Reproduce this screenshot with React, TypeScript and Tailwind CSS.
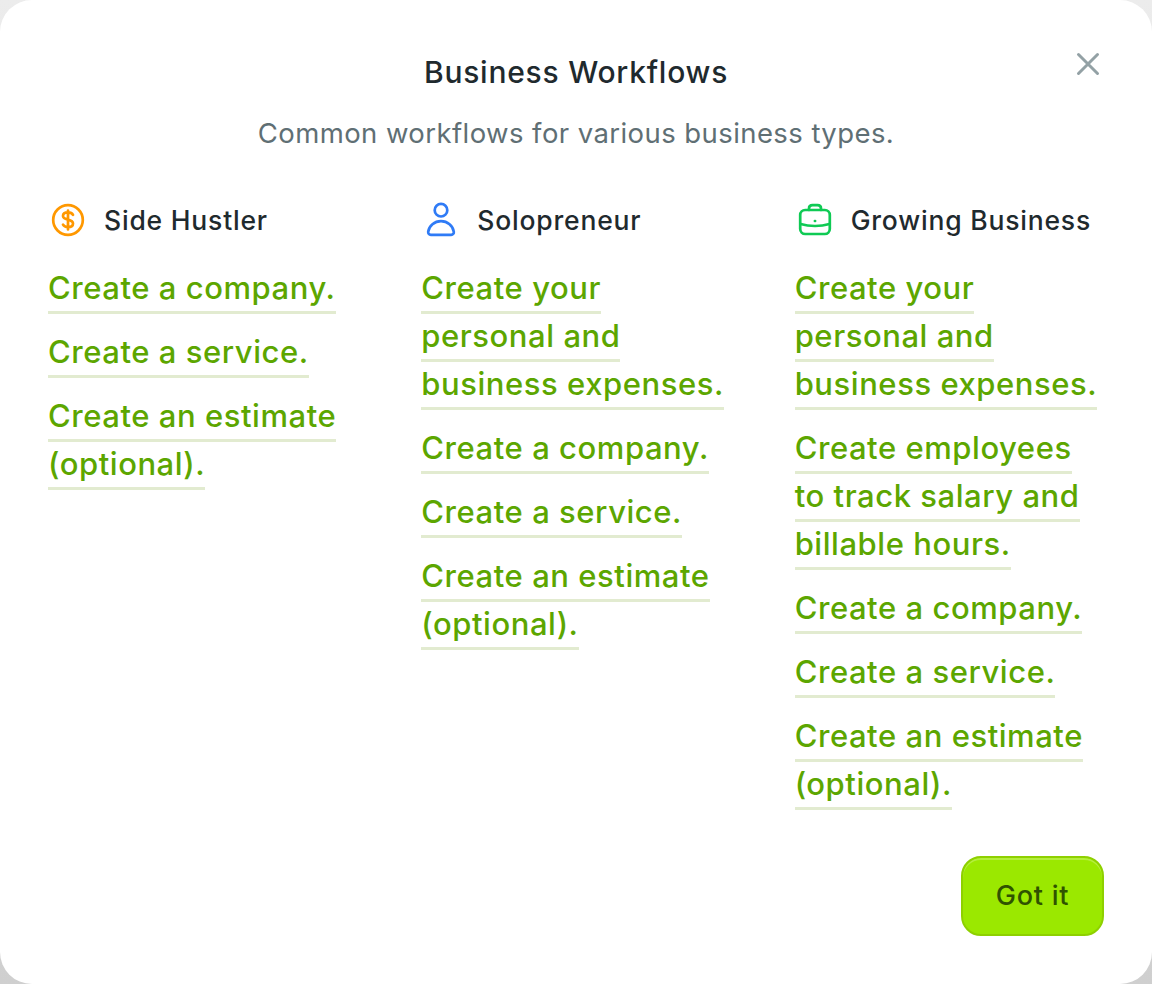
import { FC } from 'react'

const font = 'font-["Inter",sans-serif]'

const DollarIcon: FC = () => (
  <svg viewBox="0 0 40 40" fill="none" stroke="#ff9800" strokeWidth="2.700" strokeLinecap="round" strokeLinejoin="round" className="size-10 shrink-0">
    <circle cx="20" cy="20" r="14.800" />
    <path d="M25 14.800c-.8-1.500-2.600-2.400-5-2.400-3 0-5 1.500-5 3.600 0 4.800 10 2.400 10 7.400 0 2.100-2 3.600-5 3.600-2.400 0-4.200-.9-5-2.400M20 10.500v19" />
  </svg>
)

const PersonIcon: FC = () => (
  <svg viewBox="0 0 40 40" fill="none" stroke="#2f7bf6" strokeWidth="2.700" strokeLinecap="round" strokeLinejoin="round" className="size-10 shrink-0">
    <circle cx="20" cy="10.200" r="6.300" />
    <path d="M20 21.200c-6.500 0-12 4.600-12.800 10.600-.2 1.800.9 3 2.600 3h20.400c1.700 0 2.800-1.200 2.600-3C32 25.800 26.500 21.200 20 21.200Z" />
  </svg>
)

const CaseIcon: FC = () => (
  <svg viewBox="0 0 40 40" fill="none" stroke="#0fca54" strokeWidth="2.700" strokeLinecap="round" strokeLinejoin="round" className="size-10 shrink-0">
    <rect x="5.200" y="10" width="29.600" height="24" rx="5" />
    <path d="M14 10V8.500C14 6.500 15.500 5.200 17.500 5.200h5C24.500 5.200 26 6.500 26 8.500V10M5.500 24c4.500 1.300 9 2 14.500 2s10-.7 14.500-2" />
    <path d="M19.900 21h.2" />
  </svg>
)

const links: Record<string, string[]> = {
  company: ['Create a company.'],
  service: ['Create a service.'],
  estimate: ['Create an estimate', '(optional).'],
  expenses: ['Create your', 'personal and', 'business expenses.'],
  employees: ['Create employees', 'to track salary and', 'billable hours.'],
}

const columns = [
  { title: 'Side Hustler', icon: <DollarIcon />, items: ['company', 'service', 'estimate'] },
  { title: 'Solopreneur', icon: <PersonIcon />, items: ['expenses', 'company', 'service', 'estimate'] },
  { title: 'Growing Business', icon: <CaseIcon />, items: ['expenses', 'employees', 'company', 'service', 'estimate'] },
]

const App: FC = () => {
  return (
    <div className={`h-[984px] w-[1152px] overflow-hidden bg-gradient-to-b from-[#ececec] to-[#cfcfcf] ${font}`}>
      <div className="relative flex h-full flex-col rounded-[32px] bg-white px-12 pt-[48px]">
        <button type="button" className="absolute top-[48px] right-[48px] text-[#93a1a5]">
          <svg viewBox="0 0 32 32" fill="none" stroke="currentColor" strokeWidth="3" strokeLinecap="round" className="size-8">
            <path d="M6.500 6.500l19 19M25.500 6.500l-19 19" />
          </svg>
        </button>

        <h1 className="text-center text-[30px] leading-[48px] font-[550] tracking-[0.75px] text-[#1f2a2e]">Business Workflows</h1>
        <p className="mt-[13px] text-center text-[27.500px] leading-[48px] tracking-[0.42px] text-[#5f6f74]">Common workflows for various business types.</p>

        <div className="mt-[39px] grid grid-cols-3 gap-x-16">
          {columns.map((col) => (
            <div key={col.title} className="flex flex-col">
              <div className="flex h-12 items-center gap-4">
                {col.icon}
                <h2 className="pt-[2px] text-[26.500px] font-medium tracking-[0.8px] text-[#1f2a2e]">{col.title}</h2>
              </div>
              <ul className="mt-[22px] flex flex-col gap-4">
                {col.items.map((key) => (
                  <li key={key} className="flex flex-col">
                    {links[key].map((line) => (
                      <a key={line} href="#" className="box-border h-12 w-fit border-b-[3px] border-[#e2ebd0] text-[31px] leading-[44px] font-[550] tracking-[0.55px] whitespace-nowrap text-[#5ca600]">
                        {line}
                      </a>
                    ))}
                  </li>
                ))}
              </ul>
            </div>
          ))}
        </div>

        <div className="absolute right-[48px] bottom-[48px]">
          <button type="button" className="h-20 w-[143px] rounded-[20px] border-2 border-[#8ed000] bg-[#9be800] text-[27px] font-medium tracking-[0.8px] text-[#2f5200] shadow-[inset_0_2px_0_#b4ee3c]">
            Got it
          </button>
        </div>
      </div>
    </div>
  )
}

export default App
